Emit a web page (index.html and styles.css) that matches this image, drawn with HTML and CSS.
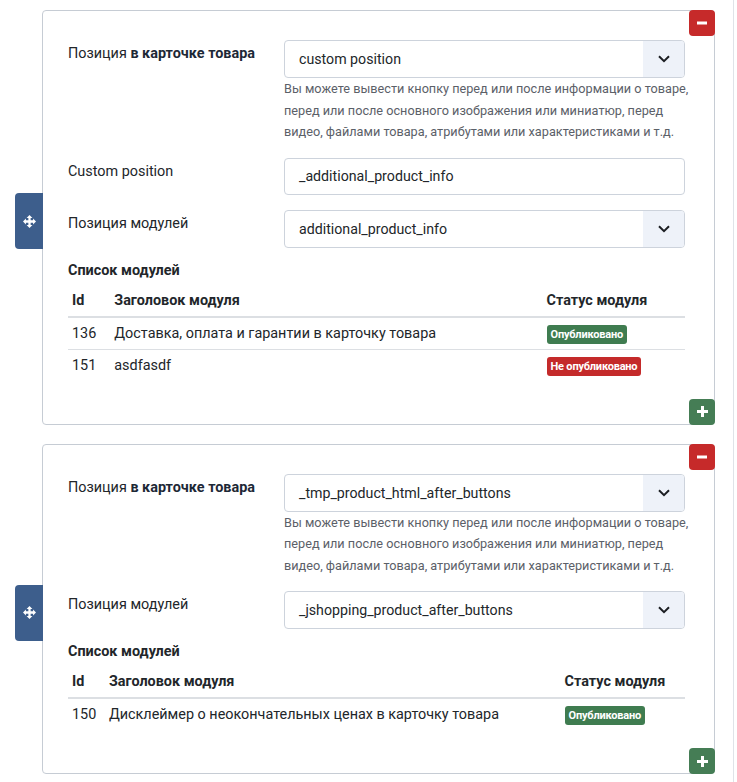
FILE: index.html
```html
<!DOCTYPE html>
<html lang="ru">
<head>
<meta charset="utf-8">
<link rel="stylesheet" href="styles.css">
</head>
<body>
<div class="page">
  <div class="card">
    <button class="btn-remove" type="button"><svg width="10" height="10" viewBox="0 0 10 10"><rect x="0" y="3.5" width="10" height="3" fill="#fff"/></svg></button>
    <div class="drag"><svg width="13" height="13" viewBox="0 0 16 16"><path d="M8 0 L11.6 3.6 H9.4 V6.6 H12.4 V4.4 L16 8 L12.4 11.6 V9.4 H9.4 V12.4 H11.6 L8 16 L4.4 12.4 H6.6 V9.4 H3.6 V11.6 L0 8 L3.6 4.4 V6.6 H6.6 V3.6 H4.4 Z" fill="#fff"/></svg></div>
    <div class="row">
      <div class="label">Позиция <b>в карточке товара</b></div>
      <div class="control">
        <div class="select"><span class="select-value">custom position</span><span class="select-arrow"><svg width="12" height="8" viewBox="0 0 12 8"><path d="M1 1.2 L6 6.2 L11 1.2" fill="none" stroke="#1c1f23" stroke-width="2"/></svg></span></div>
        <div class="help">Вы можете вывести кнопку перед или после информации о товаре, перед или после основного изображения или миниатюр, перед видео, файлами товара, атрибутами или характеристиками и т.д.</div>
      </div>
    </div>
    <div class="row">
      <div class="label">Custom position</div>
      <div class="control">
        <div class="input">_additional_product_info</div>
      </div>
    </div>
    <div class="row">
      <div class="label">Позиция модулей</div>
      <div class="control">
        <div class="select"><span class="select-value">additional_product_info</span><span class="select-arrow"><svg width="12" height="8" viewBox="0 0 12 8"><path d="M1 1.2 L6 6.2 L11 1.2" fill="none" stroke="#1c1f23" stroke-width="2"/></svg></span></div>
      </div>
    </div>
    <div class="list-title">Список модулей</div>
    <table class="modules">
      <thead><tr><th>Id</th><th>Заголовок модуля</th><th>Статус модуля</th></tr></thead>
      <tbody>
        <tr><td>136</td><td>Доставка, оплата и гарантии в карточку товара</td><td><span class="badge badge-ok">Опубликовано</span></td></tr>
        <tr><td>151</td><td>asdfasdf</td><td><span class="badge badge-off">Не опубликовано</span></td></tr>
      </tbody>
    </table>
    <button class="btn-add" type="button"><svg width="11" height="11" viewBox="0 0 11 11"><rect x="0" y="4" width="11" height="3" fill="#fff"/><rect x="4" y="0" width="3" height="11" fill="#fff"/></svg></button>
  </div>

  <div class="card">
    <button class="btn-remove" type="button"><svg width="10" height="10" viewBox="0 0 10 10"><rect x="0" y="3.5" width="10" height="3" fill="#fff"/></svg></button>
    <div class="drag"><svg width="13" height="13" viewBox="0 0 16 16"><path d="M8 0 L11.6 3.6 H9.4 V6.6 H12.4 V4.4 L16 8 L12.4 11.6 V9.4 H9.4 V12.4 H11.6 L8 16 L4.4 12.4 H6.6 V9.4 H3.6 V11.6 L0 8 L3.6 4.4 V6.6 H6.6 V3.6 H4.4 Z" fill="#fff"/></svg></div>
    <div class="row">
      <div class="label">Позиция <b>в карточке товара</b></div>
      <div class="control">
        <div class="select"><span class="select-value">_tmp_product_html_after_buttons</span><span class="select-arrow"><svg width="12" height="8" viewBox="0 0 12 8"><path d="M1 1.2 L6 6.2 L11 1.2" fill="none" stroke="#1c1f23" stroke-width="2"/></svg></span></div>
        <div class="help">Вы можете вывести кнопку перед или после информации о товаре, перед или после основного изображения или миниатюр, перед видео, файлами товара, атрибутами или характеристиками и т.д.</div>
      </div>
    </div>
    <div class="row">
      <div class="label">Позиция модулей</div>
      <div class="control">
        <div class="select"><span class="select-value">_jshopping_product_after_buttons</span><span class="select-arrow"><svg width="12" height="8" viewBox="0 0 12 8"><path d="M1 1.2 L6 6.2 L11 1.2" fill="none" stroke="#1c1f23" stroke-width="2"/></svg></span></div>
      </div>
    </div>
    <div class="list-title">Список модулей</div>
    <table class="modules">
      <thead><tr><th>Id</th><th>Заголовок модуля</th><th>Статус модуля</th></tr></thead>
      <tbody>
        <tr><td>150</td><td>Дисклеймер о неокончательных ценах в карточку товара</td><td><span class="badge badge-ok">Опубликовано</span></td></tr>
      </tbody>
    </table>
    <button class="btn-add" type="button"><svg width="11" height="11" viewBox="0 0 11 11"><rect x="0" y="4" width="11" height="3" fill="#fff"/><rect x="4" y="0" width="3" height="11" fill="#fff"/></svg></button>
  </div>
</div>
</body>
</html>
```

FILE: styles.css
```css
* { box-sizing: border-box; }
html, body { margin: 0; padding: 0; background: #fff; }
body {
  font-family: Roboto, "Noto Sans", "Liberation Sans", sans-serif;
  font-size: 14.4px;
  color: #22262a;
}
.page {
  width: 734px;
  min-height: 782px;
  padding: 10px 18px 0 42px;
  border-right: 1px solid #dfe3e8;
}
.card {
  position: relative;
  border: 1px solid #c6ccd4;
  border-radius: 4px;
  padding: 29px 29px 43px 25px;
  margin-bottom: 19px;
}
.btn-remove, .btn-add {
  position: absolute;
  right: -1px;
  width: 26px;
  height: 26px;
  border: 0;
  padding: 0;
  border-radius: 4px;
  display: flex;
  align-items: center;
  justify-content: center;
}
.btn-remove { top: -1px; background: #c62a2a; }
.btn-add { bottom: -1px; background: #457d55; }
.drag {
  position: absolute;
  left: -28px;
  top: 50%;
  margin-top: -24px;
  width: 28px;
  height: 56px;
  background: #3d5e8c;
  border-radius: 4px 0 0 4px;
  display: flex;
  align-items: center;
  justify-content: center;
}
.row {
  display: grid;
  grid-template-columns: 216px 401px;
  margin-bottom: 15px;
}
.label {
  padding-top: 4px;
  line-height: 20px;
  color: #22262a;
}
.label b { font-weight: 700; color: #1d2836; }
.select, .input {
  height: 38px;
  border: 1px solid #cdd3dc;
  border-radius: 4px;
  display: flex;
  align-items: center;
  font-size: 14.2px;
  color: #22262a;
  background: #fff;
  overflow: hidden;
}
.input { height: 37px; padding-left: 14px; }
.select-value { flex: 1; padding-left: 14px; }
.select-arrow {
  width: 41px;
  height: 100%;
  background: #eef2f9;
  display: flex;
  align-items: center;
  justify-content: center;
}
.help {
  font-size: 12.7px;
  line-height: 21.5px;
  color: #5b6068;
  margin-top: 0;
  margin-right: -10px;
}
.list-title {
  font-weight: 700;
  line-height: 20px;
  margin-top: 13px;
  margin-bottom: 4px;
  color: #22262a;
}
.row + .list-title { margin-top: -2px; }
.modules {
  width: 617px;
  border-collapse: collapse;
}
.modules th, .modules td {
  text-align: left;
  padding: 4px;
  line-height: 23px;
  vertical-align: baseline;
}
.modules th {
  font-weight: 700;
  border-bottom: 2px solid #dcdfe3;
}
.modules tbody tr + tr td { border-top: 1px solid #dcdfe3; }
.badge {
  display: inline-block;
  font-size: 11px;
  font-weight: 700;
  line-height: 19px;
  padding: 0 4px;
  border-radius: 3px;
  color: #fff;
  letter-spacing: -0.2px;
}
.badge-ok { background: #3f7c50; }
.badge-off { background: #c42a2a; }
```
